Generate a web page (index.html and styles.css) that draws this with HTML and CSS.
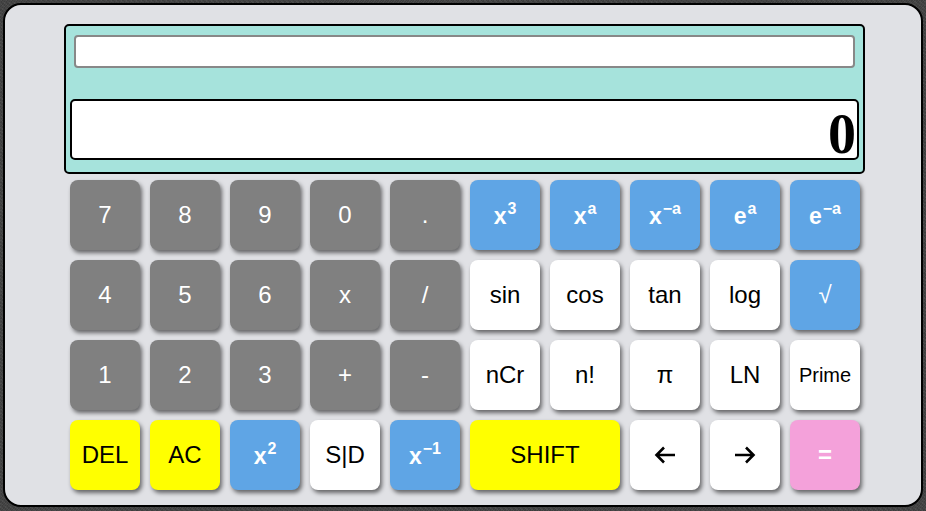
FILE: index.html
```html
<!DOCTYPE html>
<html>
<head>
<meta charset="utf-8">
<link rel="stylesheet" href="styles.css">
</head>
<body>
<div class="calc">
  <div class="display">
    <div class="input"></div>
    <div class="result">0</div>
  </div>
  <div class="keys">
    <div class="key gray">7</div>
    <div class="key gray">8</div>
    <div class="key gray">9</div>
    <div class="key gray">0</div>
    <div class="key gray">.</div>
    <div class="key blue pow">x<span class="sup">3</span></div>
    <div class="key blue pow">x<span class="sup">a</span></div>
    <div class="key blue pow">x<span class="sup">−a</span></div>
    <div class="key blue pow">e<span class="sup">a</span></div>
    <div class="key blue pow">e<span class="sup">−a</span></div>

    <div class="key gray">4</div>
    <div class="key gray">5</div>
    <div class="key gray">6</div>
    <div class="key gray">x</div>
    <div class="key gray">/</div>
    <div class="key white">sin</div>
    <div class="key white">cos</div>
    <div class="key white">tan</div>
    <div class="key white">log</div>
    <div class="key blue">√</div>

    <div class="key gray">1</div>
    <div class="key gray">2</div>
    <div class="key gray">3</div>
    <div class="key gray">+</div>
    <div class="key gray">-</div>
    <div class="key white">nCr</div>
    <div class="key white">n!</div>
    <div class="key white">π</div>
    <div class="key white">LN</div>
    <div class="key white small">Prime</div>

    <div class="key yellow">DEL</div>
    <div class="key yellow">AC</div>
    <div class="key blue pow">x<span class="sup">2</span></div>
    <div class="key white">S|D</div>
    <div class="key blue pow">x<span class="sup">−1</span></div>
    <div class="key yellow wide">SHIFT</div>
    <div class="key white"><svg width="22" height="18" viewBox="0 0 22 18"><path d="M21 9H2.5M10 1.5L2.5 9L10 16.5" fill="none" stroke="#000" stroke-width="2.6"/></svg></div>
    <div class="key white"><svg width="22" height="18" viewBox="0 0 22 18"><path d="M1 9H19.5M12 1.5L19.5 9L12 16.5" fill="none" stroke="#000" stroke-width="2.6"/></svg></div>
    <div class="key pink bold">=</div>
  </div>
</div>
</body>
</html>
```
FILE: styles.css
```css
html, body {
  margin: 0;
  padding: 0;
}
body {
  background-color: #454545;
  background-image:
    repeating-linear-gradient(37deg, rgba(255,255,255,0.05) 0 1px, transparent 1px 3px),
    repeating-linear-gradient(-53deg, rgba(0,0,0,0.12) 0 1px, transparent 1px 2px);
  width: 926px;
  height: 511px;
  overflow: hidden;
  font-family: "Liberation Sans", Arial, sans-serif;
}
.calc {
  margin: 3px;
  width: 920px;
  height: 504px;
  box-sizing: border-box;
  border: 2px solid #000;
  border-radius: 18px;
  background: #e0e1e5;
  padding-top: 19px;
}
.display {
  width: 789px;
  height: 137px;
  margin-left: 59px;
  border: 2px solid #000;
  border-radius: 5px;
  background: #a6e3dc;
  padding: 9px 4px 0 4px;
  box-sizing: content-box;
}
.input {
  margin: 0 4px;
  height: 29px;
  border: 2px solid #888;
  border-radius: 4px;
  background: #fff;
}
.result {
  margin-top: 31px;
  height: 47px;
  padding-top: 10px;
  border: 2px solid #000;
  border-radius: 5px;
  background: #fff;
  text-align: right;
  font-family: "Liberation Serif", "Times New Roman", serif;
  font-weight: bold;
  font-size: 56px;
  line-height: 47px;
  padding-right: 1px;
}
.keys {
  margin: 6px 0 0 65px;
  display: grid;
  grid-template-columns: repeat(10, 70px);
  grid-auto-rows: 70px;
  gap: 10px;
}
.key {
  display: flex;
  align-items: center;
  justify-content: center;
  border-radius: 8px;
  font-size: 24px;
  box-shadow: 2px 3px 4px rgba(0,0,0,0.55);
}
.gray { background: #808080; color: #fff; }
.blue { background: #5fa5e5; color: #fff; }
.white { background: #fff; color: #000; }
.yellow { background: #ffff00; color: #000; }
.pink { background: #f4a1da; color: #fff; }
.bold { font-weight: bold; }
.pow { font-weight: bold; font-size: 23px; padding-top: 2px; }
.small { font-size: 20px; }
.wide { grid-column: span 2; }
.sup {
  font-size: 16px;
  position: relative;
  top: -7px;
  margin-left: 1px;
}
```
